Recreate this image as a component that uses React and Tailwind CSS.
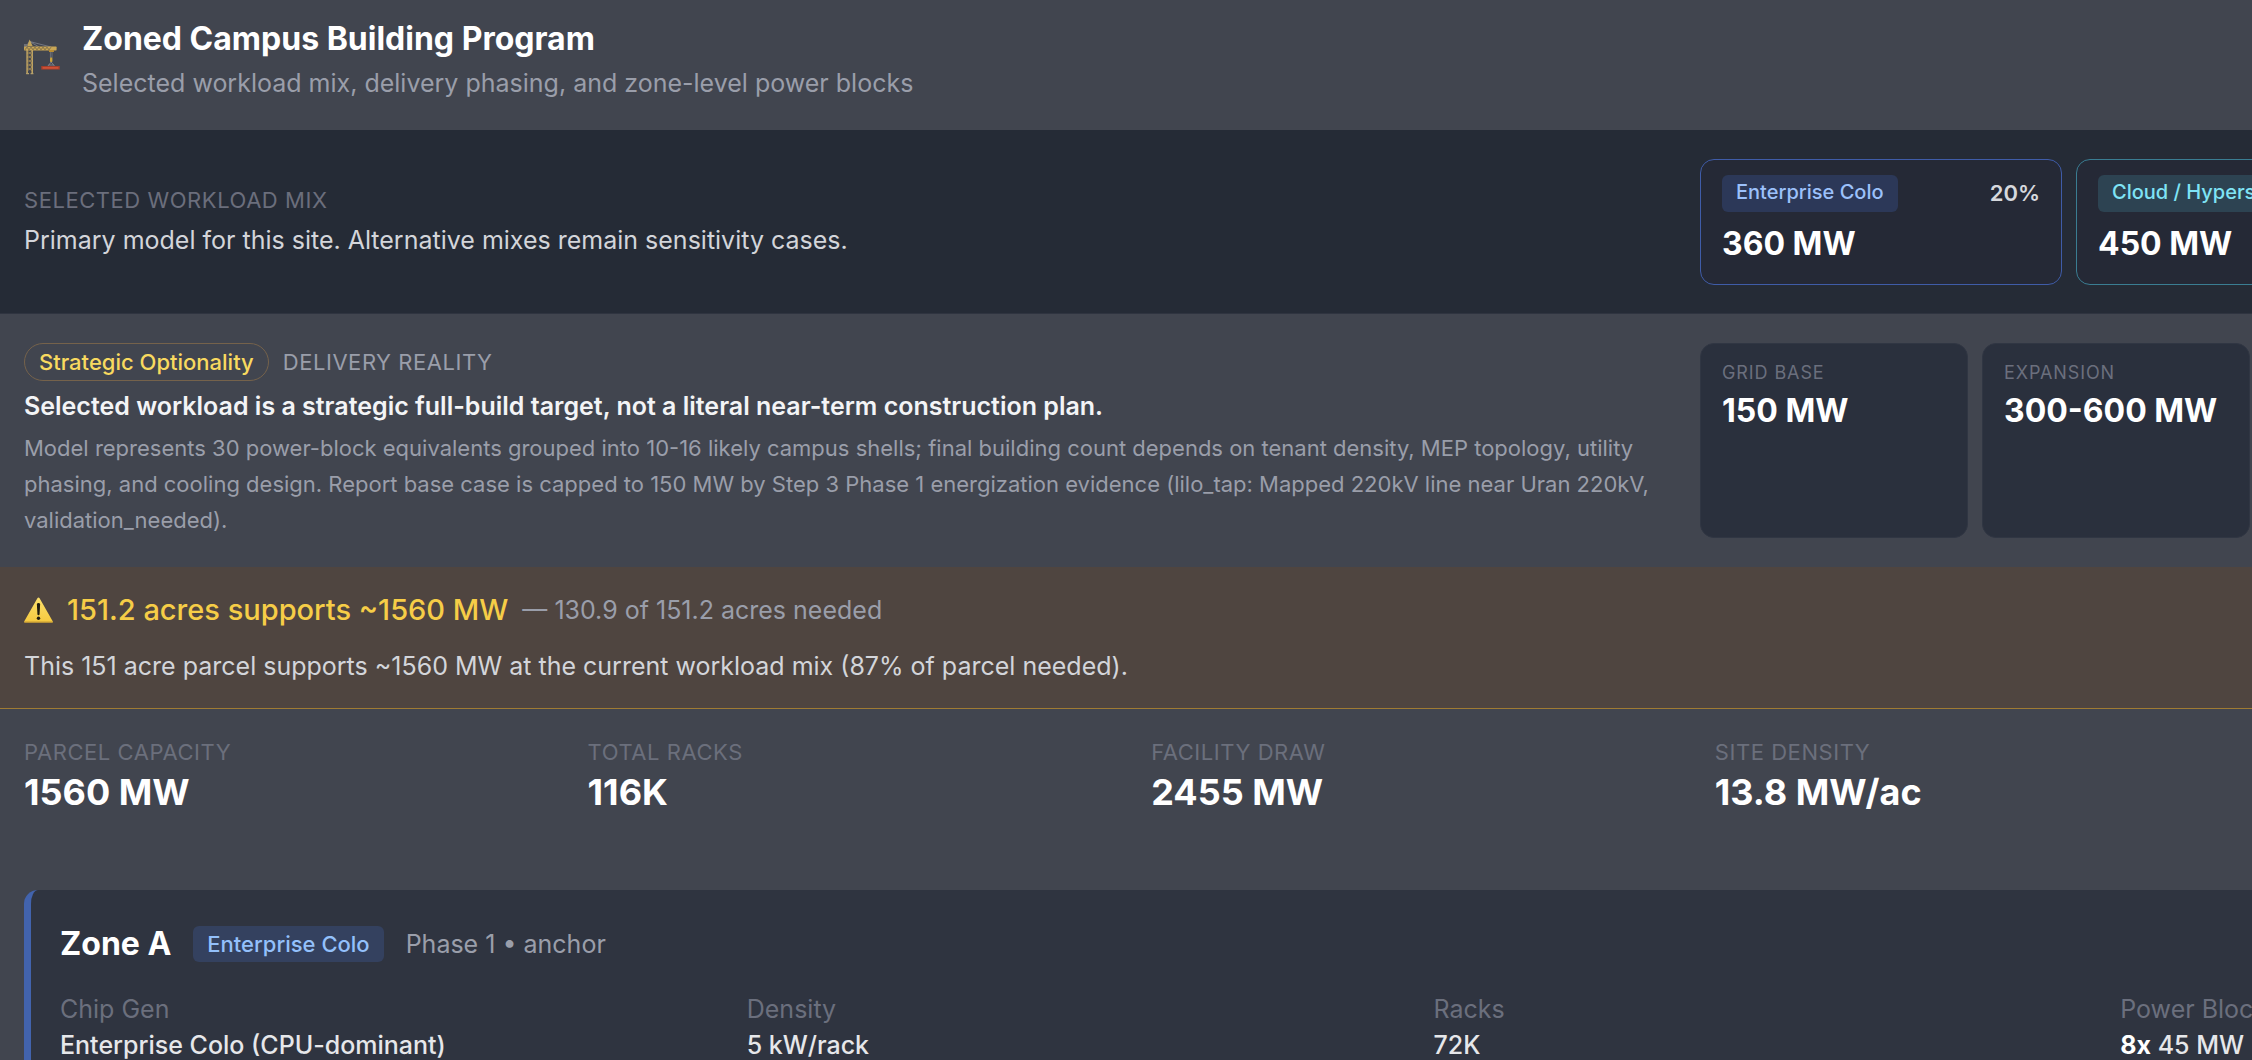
import React from "react";

const workloads = [
  {
    name: "Enterprise Colo",
    share: "20%",
    mw: "360 MW",
    card: "border-[#3f5ca8]",
    pill: "bg-[#2c3858] text-[#9cc1fb]",
  },
  {
    name: "Cloud / Hyperscale",
    share: "25%",
    mw: "450 MW",
    card: "border-[#3a7d92]",
    pill: "bg-[#2d4352] text-[#7fe3f5]",
  },
];

const delivery = [
  { label: "Grid Base", value: "150 MW" },
  { label: "Expansion", value: "300-600 MW" },
];

const stats = [
  { label: "Parcel Capacity", value: "1560 MW" },
  { label: "Total Racks", value: "116K" },
  { label: "Facility Draw", value: "2455 MW" },
  { label: "Site Density", value: "13.8 MW/ac" },
];

function CraneIcon() {
  return (
    <svg viewBox="0 0 36 36" className="mt-[22px] size-9 shrink-0" aria-hidden="true">
      <path d="M1 8.5 L5.7 2.5 L27 8 M5.7 2.5 L15 8" stroke="#7d828d" strokeWidth="0.8" fill="none" />
      <rect x="0" y="5" width="3" height="3.4" fill="#6f7178" />
      <path d="M5.6 0.5 L6.8 3 L8.6 7 H3.2 L4.6 3 Z" fill="#c2a45a" />
      <rect x="0" y="7.6" width="32.6" height="3.8" rx="0.6" fill="#c9a655" />
      <path
        d="M1 10.8 L3 8.2 L5 10.8 L7 8.2 L9 10.8 L11 8.2 L13 10.8 L15 8.2 L17 10.8 L19 8.2 L21 10.8 L23 8.2 L25 10.8 L27 8.2"
        stroke="#6b6046"
        strokeWidth="0.8"
        fill="none"
      />
      <rect x="25" y="11" width="5" height="2" rx="0.6" fill="#b98d34" />
      <path d="M3.1 11 V35 M8.2 11 V35" stroke="#cdae66" strokeWidth="1.4" fill="none" />
      <path
        d="M3.1 12 L8.2 16 L3.1 20 L8.2 24 L3.1 28 L8.2 32 M8.2 12 L3.1 16 L8.2 20 L3.1 24 L8.2 28 L3.1 32"
        stroke="#a98f55"
        strokeWidth="0.9"
        fill="none"
      />
      <path d="M2.2 34.6 H5 M6.6 34.6 H9.4" stroke="#b5a06c" strokeWidth="1.2" />
      <path d="M26.4 13 V19 M28 13 V19" stroke="#7f838c" strokeWidth="0.7" />
      <rect x="26" y="18.6" width="2.4" height="4.4" rx="0.8" fill="#c9a23c" />
      <path d="M27.2 23 L23.6 27.4 M27.2 23 L30.8 27.4 M24.6 26 H29.8" stroke="#8b8e97" strokeWidth="0.8" fill="none" />
      <rect x="17.2" y="27" width="18.6" height="3.6" fill="#a33f2c" />
      <rect x="18.6" y="28.2" width="15.8" height="1.4" fill="#d9553a" />
    </svg>
  );
}

function WarningIcon() {
  return (
    <svg viewBox="0 0 29 26" className="h-[26px] w-[29px] shrink-0" role="img" aria-label="Warning">
      <defs>
        <linearGradient id="warn" x1="0" y1="0" x2="0" y2="1">
          <stop offset="0" stopColor="#fbe06c" />
          <stop offset="1" stopColor="#f5c93e" />
        </linearGradient>
      </defs>
      <path d="M14.5 0.4 Q15.1 0.4 15.6 1.3 L28.7 24.2 Q29.2 25.6 28 25.6 H1 Q-0.2 25.6 0.3 24.2 L13.4 1.3 Q13.9 0.4 14.5 0.4 Z" fill="url(#warn)" />
      <path d="M0.4 24.4 H28.6 L28.4 25.6 H0.6 Z" fill="#c79a30" />
      <path d="M12.9 7.4 Q12.9 6 14.5 6 Q16.1 6 16.1 7.4 L15.6 17 Q15.5 18.2 14.5 18.2 Q13.5 18.2 13.4 17 Z" fill="#1f1c10" />
      <circle cx="14.5" cy="21.3" r="1.7" fill="#1f1c10" />
    </svg>
  );
}

function Field({ label, children }) {
  return (
    <div>
      <dt className="text-[25px] leading-9 text-[#6b6f7d]">{label}</dt>
      <dd className="text-[25px] leading-9 font-medium text-[#e6e7ea]">{children}</dd>
    </div>
  );
}

export default function App() {
  return (
    <div className="h-screen overflow-hidden bg-[#41454f] font-['Inter',sans-serif]">
      <main className="w-[calc(100%+586px)]">
        <header className="flex items-start gap-[22px] px-6 pt-[17px] pb-7">
          <CraneIcon />
          <div>
            <h1 className="text-[32px] leading-[44px] font-bold text-white">Zoned Campus Building Program</h1>
            <p className="mt-[3px] text-[25px] leading-[38px] text-[#9a9eaa]">
              Selected workload mix, delivery phasing, and zone-level power blocks
            </p>
          </div>
        </header>

        <section className="grid grid-cols-[1fr_1114px] items-center gap-7 border-y border-t-[#252b36] border-b-[#2f3440] bg-[#252b36] px-6 py-7">
          <div>
            <h2 className="text-[22px] leading-[30px] tracking-wide text-[#6b6e7c] uppercase">Selected Workload Mix</h2>
            <p className="mt-1.5 text-[25px] leading-[38px] text-[#d3d5da]">
              Primary model for this site. Alternative mixes remain sensitivity cases.
            </p>
          </div>
          <div className="grid grid-cols-3 gap-3.5">
            {workloads.map((w) => (
              <article key={w.name} className={`rounded-[14px] border bg-[#252936] px-[21px] py-[15px] ${w.card}`}>
                <div className="flex items-start justify-between">
                  <span className={`rounded-md px-3.5 pb-[3px] text-[20px] leading-[34px] font-medium whitespace-nowrap ${w.pill}`}>
                    {w.name}
                  </span>
                  <span className="text-[22px] leading-9 font-semibold text-[#d6d8dd]">{w.share}</span>
                </div>
                <p className="mt-[7px] text-[32px] leading-[50px] font-bold text-white">{w.mw}</p>
              </article>
            ))}
          </div>
        </section>

        <section className="grid grid-cols-[1fr_1114px] gap-7 px-6 pt-[29px] pb-[29px]">
          <div>
            <div className="flex items-center gap-3.5">
              <span className="rounded-full border border-[#75624b] px-3.5 text-[22px] leading-9 font-medium text-[#f8d95f]">
                Strategic Optionality
              </span>
              <span className="text-[22px] leading-9 tracking-wide text-[#9a9eaa] uppercase">Delivery Reality</span>
            </div>
            <h2 className="mt-1.5 text-[25px] leading-[38px] font-semibold text-[#f3f4f6]">
              Selected workload is a strategic full-build target, not a literal near-term construction plan.
            </h2>
            <p className="mt-[5px] text-[22px] leading-9 text-[#9a9eaa]">
              Model represents 30 power-block equivalents grouped into 10-16 likely campus shells; final building count
              depends on tenant density, MEP topology, utility phasing, and cooling design. Report base case is capped
              to 150 MW by Step 3 Phase 1 energization evidence (lilo_tap: Mapped 220kV line near Uran 220kV,
              validation_needed).
            </p>
          </div>
          <dl className="grid grid-cols-4 gap-3.5">
            {delivery.map((d) => (
              <div key={d.label} className="rounded-[14px] border border-[#303643] bg-[#2a303d] px-[21px] py-[15px]">
                <dt className="text-[18px] leading-7 tracking-wider text-[#6b6f7d] uppercase">{d.label}</dt>
                <dd className="text-[32px] leading-[48px] font-bold whitespace-nowrap text-white">{d.value}</dd>
              </div>
            ))}
          </dl>
        </section>

        <section className="border-b border-[#a07b33] bg-[#4f4540] px-6 pt-6 pb-[23px]">
          <div className="flex items-center gap-3.5">
            <WarningIcon />
            <h2 className="text-[29px] leading-[38px] font-medium text-[#f6cd47]">151.2 acres supports ~1560 MW</h2>
            <span className="text-[25px] leading-[38px] text-[#9a9eaa]">— 130.9 of 151.2 acres needed</span>
          </div>
          <p className="mt-[18px] text-[25px] leading-[38px] text-[#d3d5da]">
            This 151 acre parcel supports ~1560 MW at the current workload mix (87% of parcel needed).
          </p>
        </section>

        <dl className="grid grid-cols-5 gap-7 px-6 pt-7 pb-[45px]">
          {stats.map((s) => (
            <div key={s.label} className="pb-7">
              <dt className="text-[22px] leading-[30px] tracking-wide text-[#6b6f7c] uppercase">{s.label}</dt>
              <dd className="text-[36px] leading-[50px] font-bold text-white">{s.value}</dd>
            </div>
          ))}
        </dl>

        <section className="mx-6 rounded-[14px] border-l-[7px] border-[#4263ad] bg-[#2f3440] px-[29px] pt-[29px] pb-7">
          <div className="flex items-center gap-[22px]">
            <h2 className="text-[32px] leading-[50px] font-bold text-white">Zone A</h2>
            <span className="rounded-md bg-[#34415f] px-3.5 text-[22px] leading-9 font-medium text-[#93c0fb]">
              Enterprise Colo
            </span>
            <span className="text-[25px] leading-9 text-[#9a9eaa]">Phase 1 • anchor</span>
          </div>
          <dl className="mt-[22px] grid grid-cols-4 gap-[22px]">
            <Field label="Chip Gen">Enterprise Colo (CPU-dominant)</Field>
            <Field label="Density">5 kW/rack</Field>
            <Field label="Racks">72K</Field>
            <Field label="Power Blocks">
              <strong className="font-bold text-white">8x</strong> 45 MW
            </Field>
          </dl>
        </section>
      </main>
    </div>
  );
}
